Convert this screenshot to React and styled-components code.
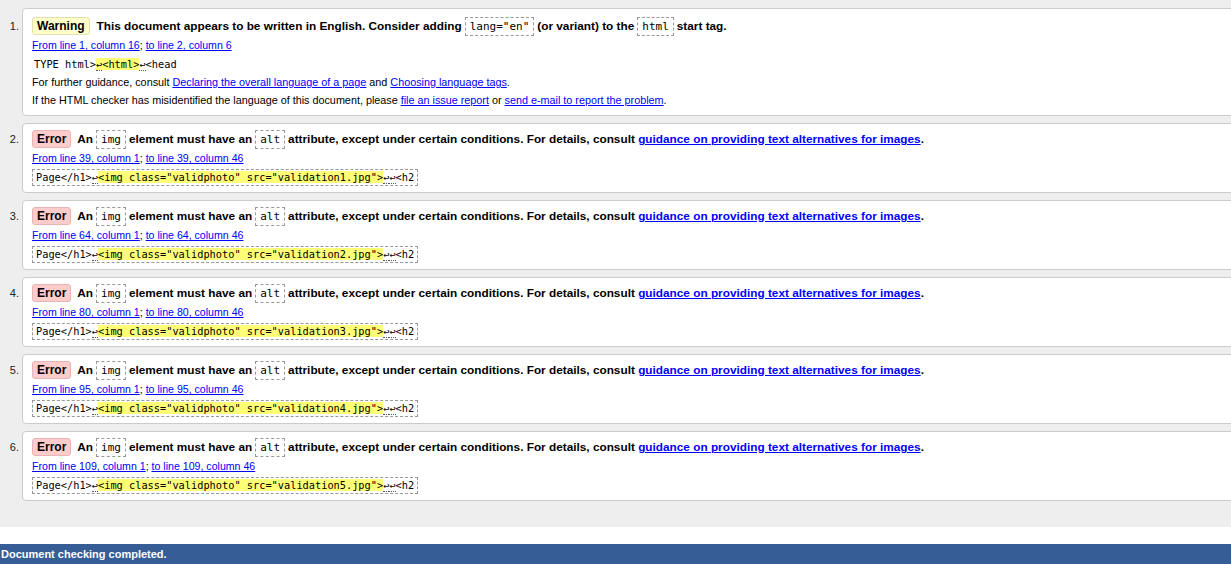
import React from 'react';
import styled, {createGlobalStyle} from 'styled-components';

const GlobalStyle = createGlobalStyle`
  html, body {
    margin: 0;
    padding: 0;
    background: #fff;
    overflow: hidden;
  }
  body {
    font-family: "Liberation Sans", Arial, sans-serif;
    color: #000;
  }
`;

const Results = styled.div`
  background: #eee;
  padding: 8px 0 26px 0;
  overflow: hidden;
`;

const List = styled.ol`
  list-style: none;
  margin: 0;
  padding: 0;
  display: flex;
  flex-direction: column;
  gap: 7px;
`;

const Item = styled.li`
  display: flex;
  align-items: flex-start;
  margin-right: -12px;
`;

const Ordinal = styled.span`
  width: 19px;
  flex: none;
  padding-right: 3px;
  text-align: right;
  font-size: 11px;
  line-height: 13px;
  margin-top: ${p => (p.$warn ? '12px' : '10px')};
  color: #222;
`;

const Card = styled.div`
  flex: 1;
  display: flex;
  flex-direction: column;
  align-items: flex-start;
  background: #fff;
  border: 1px solid #ccc;
  border-radius: 4px;
  padding: ${p => (p.$warn ? '7px 10px 6px 9px' : '5px 10px 6px 9px')};
  font-size: 11px;
`;

const Title = styled.p`
  margin: 0;
  font-size: 11.8px;
  font-weight: bold;
  line-height: 20px;
  display: flex;
  align-items: center;
  white-space: pre;
`;

const Badge = styled.strong`
  display: inline-block;
  padding: 0 4px;
  margin-right: ${p => (p.$kind === 'error' ? '6px' : '7px')};
  font-size: 12px;
  line-height: 16px;
  border-radius: 3px;
  border: 1px solid ${p => (p.$kind === 'error' ? '#e8b4b4' : '#e2e2b0')};
  background: ${p => (p.$kind === 'error' ? '#fcc' : '#ffc')};
`;

const Code = styled.code`
  display: inline-block;
  font-family: "DejaVu Sans Mono", "Liberation Mono", monospace;
  font-weight: normal;
  font-size: 11px;
  line-height: 15px;
  padding: 1px 4px;
  margin: 0 3px;
  border: 1px dashed #999;
`;

const Link = styled.a`
  color: #00f;
  text-decoration: underline;
  font-weight: ${p => (p.$bold ? 'bold' : 'normal')};
`;

const Location = styled.p`
  margin: 0;
  font-size: 10.6px;
  line-height: 18px;
`;

const Extract = styled.p`
  margin: 2px 0 0 0;
  font-family: "DejaVu Sans Mono", "Liberation Mono", monospace;
  font-size: 10.3px;
  line-height: 15px;
  white-space: pre;
  padding: ${p => (p.$boxed ? '0 3px' : '0 1px')};
  border: 1px dashed ${p => (p.$boxed ? '#999' : 'transparent')};
`;

const Mark = styled.mark`
  background: #ff7;
  color: #000;
`;

const LineBreak = styled.span`
  border-bottom: 1px dotted #555;
`;

const Note = styled.p`
  margin: 0;
  font-size: 10.8px;
  line-height: 18px;
`;

const StatusBar = styled.div`
  margin-top: 17px;
  background: #365d95;
  color: #fff;
  font-weight: bold;
  font-size: 11px;
  line-height: 20px;
  padding: 0 1px;
`;

const errors = [
  {line: 39, file: 'validation1.jpg'},
  {line: 64, file: 'validation2.jpg'},
  {line: 80, file: 'validation3.jpg'},
  {line: 95, file: 'validation4.jpg'},
  {line: 109, file: 'validation5.jpg'}
];

function Br() {
  return <LineBreak>↩</LineBreak>;
}

function WarningCard() {
  return (
    <Item>
      <Ordinal $warn>1.</Ordinal>
      <Card $warn>
        <Title>
          <Badge>Warning</Badge>
          {'This document appears to be written in English. Consider adding'}
          <Code>lang="en"</Code>
          {'(or variant) to the'}
          <Code>html</Code>
          {'start tag.'}
        </Title>
        <Location>
          <Link href="#">From line 1, column 16</Link>; <Link href="#">to line 2, column 6</Link>
        </Location>
        <Extract>
          TYPE html&gt;<Mark><Br />&lt;html&gt;</Mark><Br />&lt;head
        </Extract>
        <Note>
          For further guidance, consult <Link href="#">Declaring the overall language of a page</Link> and{' '}
          <Link href="#">Choosing language tags</Link>.
        </Note>
        <Note>
          If the HTML checker has misidentified the language of this document, please{' '}
          <Link href="#">file an issue report</Link> or <Link href="#">send e-mail to report the problem</Link>.
        </Note>
      </Card>
    </Item>
  );
}

function ErrorCard({n, line, file}) {
  return (
    <Item>
      <Ordinal>{n}.</Ordinal>
      <Card>
        <Title>
          <Badge $kind="error">Error</Badge>
          {'An'}
          <Code>img</Code>
          {'element must have an'}
          <Code>alt</Code>
          {'attribute, except under certain conditions. For details, consult '}
          <Link href="#" $bold>guidance on providing text alternatives for images</Link>
          {'.'}
        </Title>
        <Location>
          <Link href="#">From line {line}, column 1</Link>; <Link href="#">to line {line}, column 46</Link>
        </Location>
        <Extract $boxed>
          Page&lt;/h1&gt;<Br />
          <Mark>&lt;img class="validphoto" src="{file}"&gt;</Mark>
          <Br />
          <Br />&lt;h2
        </Extract>
      </Card>
    </Item>
  );
}

export default function App() {
  return (
    <>
      <GlobalStyle />
      <Results>
        <List>
          <WarningCard />
          {errors.map((e, i) => (
            <ErrorCard key={e.line} n={i + 2} line={e.line} file={e.file} />
          ))}
        </List>
      </Results>
      <StatusBar>Document checking completed.</StatusBar>
    </>
  );
}
